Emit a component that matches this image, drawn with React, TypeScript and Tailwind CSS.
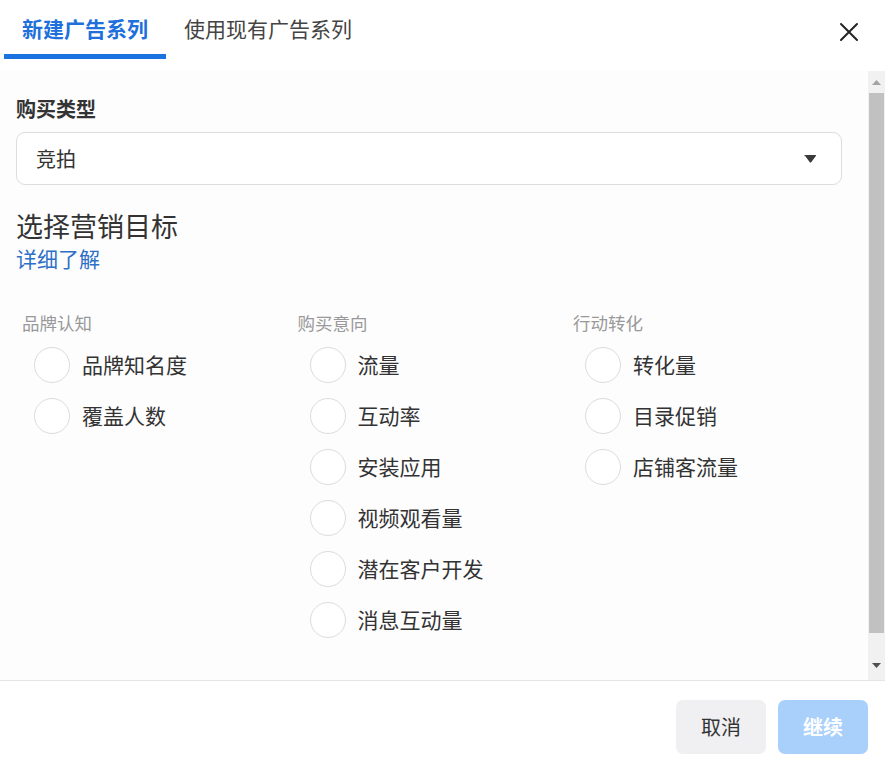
import React, { FC, useState } from 'react';

type Group = {
  title: string;
  options: string[];
};

const GROUPS: Group[] = [
  { title: '品牌认知', options: ['品牌知名度', '覆盖人数'] },
  {
    title: '购买意向',
    options: ['流量', '互动率', '安装应用', '视频观看量', '潜在客户开发', '消息互动量'],
  },
  { title: '行动转化', options: ['转化量', '目录促销', '店铺客流量'] },
];

const font = {
  fontFamily: '"Noto Sans CJK SC", "Noto Sans", "Liberation Sans", sans-serif',
};

const Radio: FC<{ label: string; checked: boolean; onClick: () => void }> = ({
  label,
  checked,
  onClick,
}) => (
  <button
    type="button"
    onClick={onClick}
    className="flex items-center h-[51px] pl-3 text-left"
  >
    <span
      className={
        checked
          ? 'w-9 h-9 rounded-full border-[10px] border-[#1877f2] bg-white'
          : 'w-9 h-9 rounded-full border border-[#dddbdd] bg-white'
      }
    />
    <span className="ml-3 text-[21px] leading-none text-[#333]">{label}</span>
  </button>
);

const ScrollBar: FC = () => (
  <div className="w-[17px] bg-[#f1f1f1] flex flex-col items-center shrink-0">
    <div className="h-[22px] flex items-center justify-center">
      <svg width="9" height="5" viewBox="0 0 9 5">
        <path d="M0 5 L4.5 0 L9 5 Z" fill="#a3a3a3" />
      </svg>
    </div>
    <div className="w-[15px] h-[540px] bg-[#c1c1c1]" />
    <div className="flex-1" />
    <div className="h-[22px] flex items-center justify-center mb-[4px]">
      <svg width="9" height="5" viewBox="0 0 9 5">
        <path d="M0 0 L9 0 L4.5 5 Z" fill="#505050" />
      </svg>
    </div>
  </div>
);

export default function App() {
  const [tab, setTab] = useState(0);
  const [objective, setObjective] = useState<string>();

  return (
    <div
      className="w-[885px] h-[765px] bg-white flex flex-col overflow-hidden"
      style={font}
    >
      {/* tabs */}
      <div className="h-[71px] flex items-start justify-between shrink-0">
        <div className="flex pl-1">
          {['新建广告系列', '使用现有广告系列'].map((label, i) => (
            <button
              key={label}
              type="button"
              onClick={() => setTab(i)}
              className={
                tab === i
                  ? 'h-[59px] flex items-start px-[18px] pt-[13px] border-b-[5px] border-[#1a73e0] text-[21px] leading-[30px] font-bold text-[#2070db]'
                  : 'h-[59px] flex items-start px-[18px] pt-[13px] text-[21px] leading-[30px] text-[#444]'
              }
            >
              {label}
            </button>
          ))}
        </div>
        <button type="button" className="mt-[22px] mr-[26px] text-[#222]">
          <svg width="20" height="20" viewBox="0 0 20 20">
            <path
              d="M2 2 L18 18 M18 2 L2 18"
              stroke="currentColor"
              strokeWidth="2"
              strokeLinecap="round"
            />
          </svg>
        </button>
      </div>

      {/* body */}
      <div className="flex flex-1 min-h-0">
        <div className="flex-1 min-w-0 bg-[#fdfdfe] pl-4 pr-[26px] pt-[24px]">
          <div className="text-[20px] leading-[28px] font-bold text-[#333]">购买类型</div>
          <div className="mt-[9px] h-[53px] rounded-[9px] border border-[#dedcde] bg-white flex items-center justify-between pl-[19px] pr-[24px]">
            <span className="text-[20px] text-[#333]">竞拍</span>
            <svg width="13" height="8" viewBox="0 0 14 9">
              <path d="M0 1.5 Q0 0 1.5 0 L12.5 0 Q14 0 13 1.2 L8 7.8 Q7 9 6 7.8 L1 1.2 Z" fill="#3a3a3a" />
            </svg>
          </div>

          <div className="mt-[25px] text-[27px] leading-[32px] text-[#333]">选择营销目标</div>
          <div className="mt-[3px] text-[21px] leading-[26px] text-[#2d70c6]">详细了解</div>

          <div className="mt-[40px] grid grid-cols-[275.5px_275.5px_1fr] pl-[6px]">
            {GROUPS.map((g) => (
              <div key={g.title} className="flex flex-col items-start">
                <div className="text-[17.5px] leading-[24px] text-[#999]">{g.title}</div>
                <div className="mt-[4px] flex flex-col">
                  {g.options.map((o) => (
                    <Radio
                      key={o}
                      label={o}
                      checked={objective === o}
                      onClick={() => setObjective(o)}
                    />
                  ))}
                </div>
              </div>
            ))}
          </div>
        </div>
        <ScrollBar />
      </div>

      {/* footer */}
      <div className="h-[85px] border-t border-[#e6e4e6] flex items-start justify-end gap-3 pt-[19px] pr-[17px] shrink-0">
        <button
          type="button"
          className="w-[90px] h-[54px] rounded-[7px] bg-[#f0eff1] text-[20px] text-[#333]"
        >
          取消
        </button>
        <button
          type="button"
          className="w-[90px] h-[54px] rounded-[7px] bg-[#a9d0fa] text-[20px] font-bold text-white"
        >
          继续
        </button>
      </div>
    </div>
  );
}
